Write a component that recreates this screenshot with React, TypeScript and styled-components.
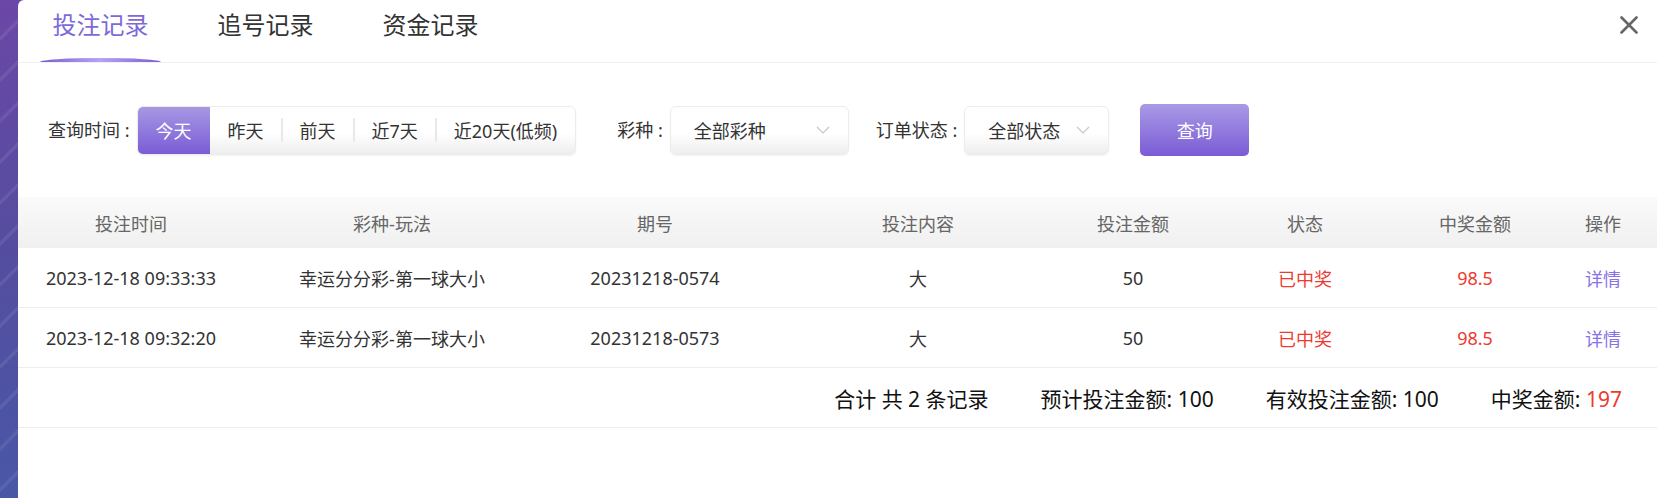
import React from "react";
import styled, { createGlobalStyle, css } from "styled-components";

const GlobalStyle = createGlobalStyle`
  html, body { margin: 0; padding: 0; }
  body { font-family: "Noto Sans", "Noto Sans CJK SC", sans-serif; }
  * { box-sizing: border-box; }
`;

const COLS = "226px 296px 230px 296px 134px 210px 130px 117px";

const Page = styled.div`
  display: flex;
  height: 100vh;
  padding-left: 18px;
  overflow: hidden;
  background:
    repeating-linear-gradient(135deg, transparent 0 26px, rgba(255, 255, 255, 0.08) 26px 29px),
    linear-gradient(180deg, #6b47a7 0%, #544d9f 50%, #4a57a7 100%);
`;

const Modal = styled.div`
  flex: 1;
  display: flex;
  flex-direction: column;
  background: #fff;
  border-top-left-radius: 6px;
`;

const TabBar = styled.div`
  display: flex;
  height: 63px;
  border-bottom: 1px solid #f0f0f2;
`;

const Tab = styled.div<{ $active?: boolean }>`
  position: relative;
  width: 165px;
  padding-top: 8px;
  text-align: center;
  font-size: 24px;
  line-height: 34px;
  color: ${(p) => (p.$active ? "#7d69d8" : "#333")};
  cursor: pointer;
  ${(p) =>
    p.$active &&
    css`
      &::after {
        content: "";
        position: absolute;
        left: 22px;
        right: 22px;
        bottom: 0;
        height: 4px;
        border-radius: 50% 50% 0 0 / 100% 100% 0 0;
        background: linear-gradient(90deg, #7a5cd6 0%, #b7a2f3 50%, #7a5cd6 100%);
      }
    `}
`;

const CloseButton = styled.button`
  margin: 16px 19px 0 auto;
  align-self: flex-start;
  width: 18px;
  height: 18px;
  padding: 0;
  border: none;
  background: none;
  cursor: pointer;
  display: flex;
`;

const FilterBar = styled.div`
  display: flex;
  align-items: center;
  height: 52px;
  margin-top: 41px;
  padding-left: 30px;
  font-size: 18px;
  color: #333;
`;

const Field = styled.div<{ $ml?: number }>`
  display: flex;
  align-items: center;
  margin-left: ${(p) => p.$ml ?? 0}px;
`;

const Label = styled.span`
  margin-right: 7px;
  line-height: 26px;
  white-space: nowrap;
`;

const boxSurface = css`
  height: 49px;
  border: 1px solid #ececec;
  border-radius: 6px;
  background: linear-gradient(180deg, #ffffff 55%, #eeeeee 100%);
  box-shadow: 0 1px 2px rgba(0, 0, 0, 0.05);
`;

const RangeGroup = styled.div`
  ${boxSurface};
  display: flex;
  overflow: hidden;
`;

const RangeButton = styled.div<{ $active?: boolean; $divider?: boolean }>`
  position: relative;
  display: flex;
  align-items: center;
  padding: 0 18px;
  white-space: nowrap;
  cursor: pointer;
  color: #333;
  ${(p) =>
    p.$active &&
    css`
      color: #fff;
      background: linear-gradient(180deg, #a798e4 0%, #7a5cd5 100%);
    `}
  ${(p) =>
    p.$divider &&
    css`
      &::before {
        content: "";
        position: absolute;
        left: -1px;
        top: 11px;
        bottom: 12px;
        width: 2px;
        background: #e8e8e8;
      }
    `}
`;

const Select = styled.div<{ $w: number }>`
  ${boxSurface};
  width: ${(p) => p.$w}px;
  display: flex;
  align-items: center;
  justify-content: space-between;
  padding: 0 18px 0 23px;
  cursor: pointer;
`;

const QueryButton = styled.button`
  margin-left: 31px;
  width: 109px;
  height: 52px;
  border: none;
  border-radius: 5px;
  background: linear-gradient(180deg, #a99ae6 0%, #7a5cd5 100%);
  color: #fff;
  font-family: inherit;
  font-size: 18px;
  cursor: pointer;
`;

const Table = styled.div`
  margin-top: 41px;
  font-size: 18px;
`;

const HeadRow = styled.div`
  display: grid;
  grid-template-columns: ${COLS};
  height: 51px;
  background: linear-gradient(180deg, #fafafa 0%, #f0f0f0 100%);
  color: #666;
`;

const Row = styled.div`
  display: grid;
  grid-template-columns: ${COLS};
  height: 60px;
  border-bottom: 1px solid #eeeef2;
  color: #333;
`;

const Cell = styled.div<{ $tone?: "red" | "link"; $pl?: number }>`
  display: flex;
  align-items: center;
  justify-content: center;
  padding-left: ${(p) => p.$pl ?? 0}px;
  white-space: nowrap;
  color: ${(p) => (p.$tone === "red" ? "#ee3a2f" : p.$tone === "link" ? "#8872e6" : "inherit")};
  cursor: ${(p) => (p.$tone === "link" ? "pointer" : "default")};
`;

const Summary = styled.div`
  display: flex;
  align-items: center;
  justify-content: flex-end;
  gap: 52px;
  height: 60px;
  padding-right: 35px;
  border-bottom: 1px solid #ececf2;
  font-size: 21px;
  color: #111;
`;

const Red = styled.span`
  color: #ee3a2f;
`;

const Chevron = () => (
  <svg width="14" height="8" viewBox="0 0 14 8" fill="none">
    <path d="M1 1 L7 7 L13 1" stroke="#c6c6ce" strokeWidth="1.2" />
  </svg>
);

const CloseIcon = () => (
  <svg width="18" height="18" viewBox="0 0 18 18">
    <path d="M1.5 1.5 L16.5 16.5 M16.5 1.5 L1.5 16.5" stroke="#666" strokeWidth="2.6" strokeLinecap="round" />
  </svg>
);

const headers = ["投注时间", "彩种-玩法", "期号", "投注内容", "投注金额", "状态", "中奖金额", "操作"];

const rows = [
  { time: "2023-12-18 09:33:33", game: "幸运分分彩-第一球大小", issue: "20231218-0574", content: "大", amount: "50", status: "已中奖", win: "98.5" },
  { time: "2023-12-18 09:32:20", game: "幸运分分彩-第一球大小", issue: "20231218-0573", content: "大", amount: "50", status: "已中奖", win: "98.5" },
];

const ranges = ["今天", "昨天", "前天", "近7天", "近20天(低频)"];

export default function App() {
  const active = 0;
  return (
    <>
      <GlobalStyle />
      <Page>
        <Modal>
          <TabBar>
            <Tab $active>投注记录</Tab>
            <Tab>追号记录</Tab>
            <Tab>资金记录</Tab>
            <CloseButton aria-label="关闭">
              <CloseIcon />
            </CloseButton>
          </TabBar>

          <FilterBar>
            <Field>
              <Label>查询时间 :</Label>
              <RangeGroup>
                {ranges.map((r, i) => (
                  <RangeButton key={r} $active={i === active} $divider={i > 0 && i - 1 !== active && i !== active}>
                    {r}
                  </RangeButton>
                ))}
              </RangeGroup>
            </Field>
            <Field $ml={41}>
              <Label>彩种 :</Label>
              <Select $w={179}>
                <span>全部彩种</span>
                <Chevron />
              </Select>
            </Field>
            <Field $ml={27}>
              <Label>订单状态 :</Label>
              <Select $w={145}>
                <span>全部状态</span>
                <Chevron />
              </Select>
            </Field>
            <QueryButton>查询</QueryButton>
          </FilterBar>

          <Table>
            <HeadRow>
              {headers.map((h, i) => (
                <Cell key={h} $pl={i === 7 ? 9 : 0}>
                  {h}
                </Cell>
              ))}
            </HeadRow>
            {rows.map((r) => (
              <Row key={r.issue}>
                <Cell>{r.time}</Cell>
                <Cell>{r.game}</Cell>
                <Cell>{r.issue}</Cell>
                <Cell>{r.content}</Cell>
                <Cell>{r.amount}</Cell>
                <Cell $tone="red">{r.status}</Cell>
                <Cell $tone="red">{r.win}</Cell>
                <Cell $tone="link" $pl={9}>
                  详情
                </Cell>
              </Row>
            ))}
            <Summary>
              <span>合计 共 2 条记录</span>
              <span>预计投注金额: 100</span>
              <span>有效投注金额: 100</span>
              <span>
                中奖金额: <Red>197</Red>
              </span>
            </Summary>
          </Table>
        </Modal>
      </Page>
    </>
  );
}
